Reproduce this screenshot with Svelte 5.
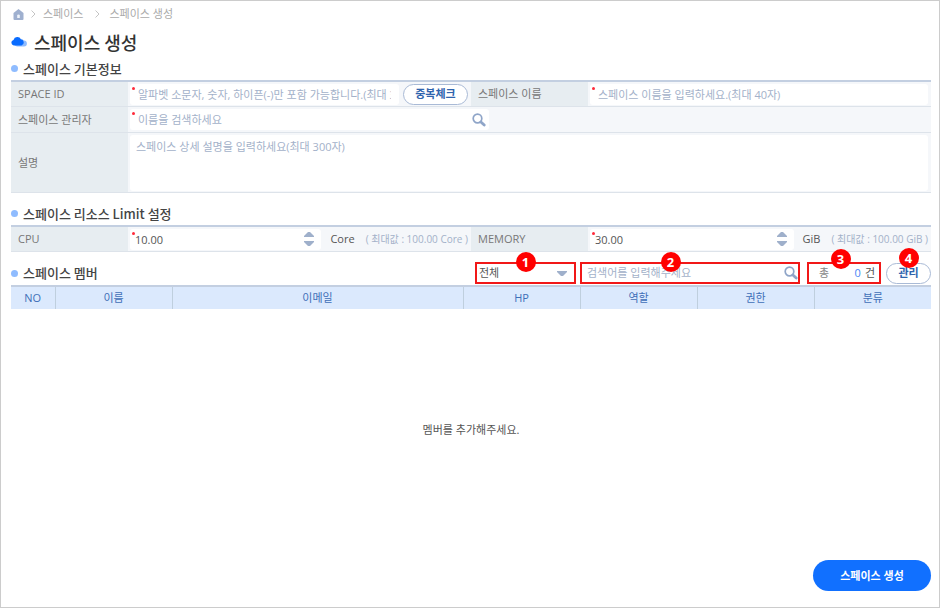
<script lang="ts">
	let spaceId = $state('');
	let spaceName = $state('');
	let manager = $state('');
	let description = $state('');
	let cpu = $state('10.00');
	let memory = $state('30.00');
	let filter = $state('all');
	let keyword = $state('');

	let members: string[][] = $state([]);

	const columns = ['NO', '이름', '이메일', 'HP', '역할', '권한', '분류'];

	function step(value: string, amount: number) {
		const next = Math.min(100, Math.max(0, Number(value) + amount));
		return next.toFixed(2);
	}
</script>

{#snippet searchIcon()}
	<svg width="14" height="14" viewBox="0 0 14 14" aria-hidden="true">
		<circle cx="5.5" cy="5.5" r="4.3" fill="none" stroke="#8fa5c8" stroke-width="1.7" />
		<path d="M8.9 8.9 12.2 12" stroke="#8fa5c8" stroke-width="2.8" stroke-linecap="round" />
	</svg>
{/snippet}

{#snippet stepper(name: string, change: (amount: number) => void)}
	<span class="stepper">
		<button type="button" aria-label="{name} +" onclick={() => change(1)}>
			<svg width="10" height="5" viewBox="0 0 10 5"><path d="M0 5V4L4 0H6L10 4V5Z" fill="#9fb0cb" /></svg>
		</button>
		<button type="button" aria-label="{name} -" onclick={() => change(-1)}>
			<svg width="10" height="5" viewBox="0 0 10 5"><path d="M0 0V1L4 5H6L10 1V0Z" fill="#9fb0cb" /></svg>
		</button>
	</span>
{/snippet}

<main class="page">
	<nav class="breadcrumb">
		<a href="/" aria-label="home">
			<svg width="11" height="11" viewBox="0 0 11 11">
				<path d="M5.5 0 10.5 4V10Q10.5 11 9.5 11H1.5Q.5 11 .5 10V4Z" fill="#9fb0cf" />
				<path d="M4.2 9V6.3Q4.2 5.5 5.5 5.5T6.8 6.3V9Z" fill="#eef3fa" />
			</svg>
		</a>
		<svg class="arrow" width="5" height="8" viewBox="0 0 5 8"><path d="M.5.5 4 4 .5 7.5" /></svg>
		<a href="/spaces">스페이스</a>
		<svg class="arrow wide" width="5" height="8" viewBox="0 0 5 8"><path d="M.5.5 4 4 .5 7.5" /></svg>
		<span>스페이스 생성</span>
	</nav>

	<h1>
		<svg width="16" height="11" viewBox="0 0 16 11" aria-hidden="true">
			<path d="M6 10.5a2.4 2.4 0 0 1 0-4.8 3.8 3.8 0 0 1 6.8-1.2 3 3 0 0 1 .2 6Z" fill="#8fbcff" />
			<path d="M2.8 9.5a2.8 2.8 0 0 1-.3-5.5A4 4 0 0 1 10 3.4a3.1 3.1 0 0 1 .4 6.1Z" fill="#0a6cff" />
		</svg>
		스페이스 생성
	</h1>

	<form onsubmit={(e) => e.preventDefault()}>
		<h2>스페이스 기본정보</h2>
		<div class="fields">
			<label class="name" for="space-id">SPACE ID</label>
			<div class="cell">
				<div class="box required">
					<input id="space-id" bind:value={spaceId} placeholder="알파벳 소문자, 숫자, 하이픈(-)만 포함 가능합니다.(최대 30자)" />
				</div>
				<button type="button" class="outline check">중복체크</button>
			</div>
			<label class="name" for="space-name">스페이스 이름</label>
			<div class="cell">
				<div class="box required">
					<input id="space-name" bind:value={spaceName} placeholder="스페이스 이름을 입력하세요.(최대 40자)" />
				</div>
			</div>

			<label class="name" for="manager">스페이스 관리자</label>
			<div class="cell span">
				<div class="box required manager">
					<input id="manager" bind:value={manager} placeholder="이름을 검색하세요" />
					<button type="button" class="icon" aria-label="검색">{@render searchIcon()}</button>
				</div>
			</div>

			<label class="name" for="description">설명</label>
			<div class="cell span">
				<textarea id="description" bind:value={description} placeholder="스페이스 상세 설명을 입력하세요(최대 300자)"></textarea>
			</div>
		</div>

		<h2>스페이스 리소스 Limit 설정</h2>
		<div class="fields limits">
			<label class="name" for="cpu">CPU</label>
			<div class="cell">
				<div class="box required number">
					<input id="cpu" bind:value={cpu} inputmode="decimal" />
					{@render stepper('CPU', (n) => (cpu = step(cpu, n)))}
				</div>
				<span class="unit">Core</span>
				<span class="max">( 최대값 : 100.00 Core )</span>
			</div>
			<label class="name" for="memory">MEMORY</label>
			<div class="cell">
				<div class="box required number">
					<input id="memory" bind:value={memory} inputmode="decimal" />
					{@render stepper('MEMORY', (n) => (memory = step(memory, n)))}
				</div>
				<span class="unit">GiB</span>
				<span class="max">( 최대값 : 100.00 GiB )</span>
			</div>
		</div>

		<div class="toolbar">
			<h2>스페이스 멤버</h2>
			<div class="marked filter">
				<select bind:value={filter} aria-label="구분">
					<option value="all">전체</option>
					<option value="name">이름</option>
					<option value="email">이메일</option>
				</select>
				<svg width="10" height="5" viewBox="0 0 10 5"><path d="M0 0V1L4 5H6L10 1V0Z" fill="#9fb0cb" /></svg>
				<span class="marker">1</span>
			</div>
			<div class="marked search">
				<input bind:value={keyword} aria-label="검색어" placeholder="검색어를 입력해주세요" />
				<button type="button" class="icon" aria-label="검색">{@render searchIcon()}</button>
				<span class="marker">2</span>
			</div>
			<div class="marked count">
				<span class="total">총</span>
				<b>{members.length}</b>
				<span>건</span>
				<span class="marker high">3</span>
			</div>
			<div class="manage">
				<button type="button" class="outline">관리</button>
				<span class="marker high">4</span>
			</div>
		</div>

		<table>
			<colgroup>
				<col class="no" />
				<col />
				<col class="email" />
				<col span="4" />
			</colgroup>
			<thead>
				<tr>
					{#each columns as column}
						<th scope="col">{column}</th>
					{/each}
				</tr>
			</thead>
			<tbody>
				{#each members as member}
					<tr>
						{#each member as value}
							<td>{value}</td>
						{/each}
					</tr>
				{:else}
					<tr>
						<td class="empty" colspan={columns.length}>멤버를 추가해주세요.</td>
					</tr>
				{/each}
			</tbody>
		</table>

		<div class="actions">
			<button type="submit">스페이스 생성</button>
		</div>
	</form>
</main>

<style>
	:global(body) {
		background: #fff;
	}

	.page {
		box-sizing: border-box;
		min-height: 100vh;
		padding: 4px 8px 12px 10px;
		border: 1px solid #ccc;
		font-family: 'Open Sans', 'Noto Sans CJK KR', sans-serif;
		font-size: 11px;
		line-height: 18px;
		color: #555;
	}

	.page :global(*) {
		box-sizing: border-box;
	}

	svg {
		display: block;
		flex: none;
	}

	input,
	textarea,
	select,
	button {
		margin: 0;
		padding: 0;
		border: 0;
		background: none;
		font: inherit;
		color: inherit;
		outline: none;
	}

	button {
		cursor: pointer;
	}

	::placeholder {
		color: #a3b1c9;
		opacity: 1;
	}

	.breadcrumb {
		display: flex;
		align-items: center;
		height: 18px;
		padding-left: 2px;
		color: #aaa;
	}

	.breadcrumb a {
		color: inherit;
		text-decoration: none;
	}

	.arrow {
		margin: 0 7px;
		fill: none;
		stroke: #c4c4c4;
	}

	.arrow.wide {
		margin: 0 9px 0 12px;
	}

	h1,
	h2 {
		display: flex;
		align-items: center;
		margin: 0;
		font-family: 'Noto Sans CJK KR', sans-serif;
		font-weight: 500;
	}

	h1 {
		gap: 7px;
		height: 31px;
		margin-top: 3px;
		font-size: 18px;
		color: #333;
	}

	h2 {
		gap: 5px;
		height: 23px;
		font-size: 13px;
		color: #444;
	}

	h2::before {
		content: '';
		width: 7px;
		height: 7px;
		border-radius: 50%;
		background: #8fbcff;
	}

	.fields {
		display: grid;
		grid-template-columns: 117px 1fr 117px 1fr;
		grid-template-rows: 25px 26px 60px;
		margin-bottom: 9px;
		border-top: 2px solid #c3cfe1;
	}

	.fields.limits {
		grid-template-rows: 25px;
	}

	.name {
		display: flex;
		align-items: center;
		padding-left: 7px;
		border-bottom: 1px solid #dde3ea;
		background: #e7edf1;
		color: #777;
	}

	.cell {
		display: flex;
		align-items: center;
		min-width: 0;
		padding: 0 3px 0 2px;
		border-bottom: 1px solid #dde3ea;
		background: #f5f7fa;
	}

	.cell.span {
		grid-column: span 3;
	}

	.box {
		position: relative;
		display: flex;
		flex: 1;
		align-items: center;
		min-width: 0;
		height: 21px;
		padding: 0 8px;
		border-radius: 3px;
		background: #fff;
	}

	.box.required::before {
		content: '';
		position: absolute;
		top: 3px;
		left: 2px;
		width: 3px;
		height: 3px;
		border-radius: 50%;
		background: #ff2a3a;
	}

	.box.manager {
		flex: none;
		width: 45%;
		padding-right: 3px;
	}

	.box.number {
		padding: 0 7px 0 5px;
	}

	.box input,
	.search input {
		flex: 1;
		width: 100%;
		min-width: 0;
		height: 20px;
	}

	textarea {
		flex: 1;
		height: 56px;
		padding: 3px 6px;
		border-radius: 3px;
		background: #fff;
		resize: none;
	}

	.outline {
		height: 21px;
		border: 1px solid #a9bad6;
		border-radius: 11px;
		background: #fff;
		font-weight: 700;
		line-height: 18px;
		color: #2f64ad;
	}

	.check {
		width: 65px;
		margin-left: 4px;
	}

	.stepper {
		display: grid;
		gap: 4px;
	}

	.stepper button {
		line-height: 0;
	}

	.unit {
		margin: 0 11px 0 9px;
	}

	.max {
		font-size: 10px;
		white-space: nowrap;
		color: #a3b1c9;
	}

	.toolbar {
		display: flex;
		align-items: center;
		height: 24px;
	}

	.toolbar h2 {
		margin-right: auto;
	}

	.marked {
		position: relative;
		display: flex;
		align-items: center;
		height: 22px;
		border: 2px solid #f11818;
	}

	.filter {
		width: 101px;
		padding-right: 7px;
	}

	.filter select {
		flex: 1;
		height: 18px;
		padding-left: 2px;
		appearance: none;
	}

	.search {
		width: 220px;
		margin-left: 4px;
		padding-left: 5px;
	}

	.search input {
		height: 18px;
	}

	.search .marker {
		left: 41%;
	}

	.count {
		width: 74px;
		margin-left: 7px;
		padding: 0 4px 0 10px;
	}

	.count .marker {
		left: 45%;
	}

	.total {
		margin-right: auto;
		color: #888;
	}

	.count b {
		margin-right: 4px;
		font-weight: 400;
		color: #4a86f5;
	}

	.manage {
		position: relative;
		margin-left: 5px;
	}

	.manage .outline {
		display: block;
		width: 45px;
	}

	.marker {
		position: absolute;
		top: -12px;
		left: 50%;
		width: 20px;
		height: 20px;
		margin-left: -10px;
		border-radius: 50%;
		background: #f00;
		font-size: 13px;
		font-weight: 700;
		line-height: 20px;
		text-align: center;
		color: #fff;
	}

	.marker.high {
		top: -15px;
	}

	table {
		width: 100%;
		border-collapse: collapse;
		table-layout: fixed;
	}

	col {
		width: 117px;
	}

	col.no {
		width: 44px;
	}

	col.email {
		width: auto;
	}

	th {
		height: 23px;
		padding: 0;
		border-top: 2px solid #c3cfe1;
		border-left: 1px solid #bfcfde;
		background: #dbe9fd;
		font-weight: 400;
		color: #3f6fb8;
	}

	th:first-child {
		border-left: 0;
	}

	.empty {
		height: 242px;
		padding: 0;
		text-align: center;
	}

	.actions {
		display: flex;
		justify-content: flex-end;
		margin-top: 9px;
	}

	.actions button {
		width: 118px;
		height: 31px;
		border-radius: 16px;
		background: #1170ff;
		font-weight: 700;
		color: #fff;
	}
</style>
